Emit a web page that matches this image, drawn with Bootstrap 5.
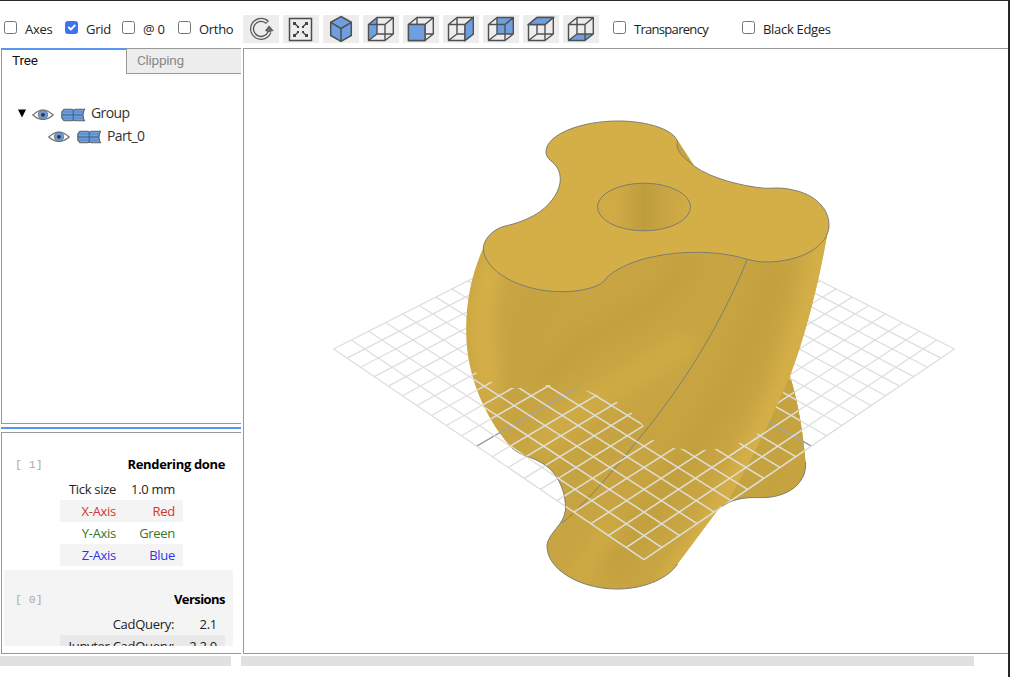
<!DOCTYPE html>
<html lang="en">
<head>
<meta charset="utf-8">
<title>CAD Viewer</title>
<meta name="viewport" content="width=device-width, initial-scale=1">
<link href="https://cdn.jsdelivr.net/npm/bootstrap@5.3.0/dist/css/bootstrap.min.css" rel="stylesheet">
<style>
body{width:1010px;height:677px;overflow:hidden;background:#fff;color:#222;font:13px/18px "Open Sans","Noto Sans",sans-serif;letter-spacing:-.3px}
.viewer{width:1010px;height:677px;border-top:1px solid #26272c;border-right:2px solid #26272c}
.toolbar{height:47px;padding-top:14px}
.opt{height:28px;gap:8px;white-space:nowrap}
.opt .form-check-input{width:13px;height:13px;margin:-4px 0 0;border:1px solid #767676;border-radius:2.5px;flex:none;background-size:13px}
.opt .form-check-input:checked{background-color:#3b74f2;border-color:#3b74f2}
.opt.long{letter-spacing:-.7px}
.left-opts{width:243px;padding-left:4px}
.tool{width:36px;height:28px;background:#ededed;border:0;padding:0;border-radius:0;line-height:0}
.tool svg{display:block}
.side{width:241px;padding-left:1px}
.tabs{height:26px;font:13.6px/21px Roboto,sans-serif;letter-spacing:-.15px}
.tab-a{width:125px;border-top:2px solid #5897ee;border-left:1px solid #999;padding-left:10px;color:#111}
.tab-b{width:115px;background:#ededed;border:1px solid #999;border-right:0;padding-left:10px;color:#888;line-height:23px;letter-spacing:-.3px}
.tree{height:350px;border-left:1px solid #999;border-bottom:1px solid #999;padding:28px 0 0 16px;font-size:14px;letter-spacing:-.6px;color:#333}
.tree-row{height:23px}
.tree-row span{margin-top:-2px}
.split{height:2px;background:#5897ee;margin:3px 0}
.info{height:222px;border:1px solid #999;border-right:0;padding:13px 8px 7px 2px}
.info-in{height:200px;overflow:hidden}
.sec{padding:9px 8px 0 11px}
.num{font:11.5px/16px "Liberation Mono",monospace;color:#aaa;width:45px;flex:none;letter-spacing:0;white-space:pre;padding-top:2px}
.ttl{font-weight:700;color:#000;text-align:right;letter-spacing:-.35px}
.sec2 .ttl{letter-spacing:-.55px}
.cells{display:grid;line-height:22px;text-align:right}
.cells>div{padding-right:8px;white-space:nowrap}
.alt{background:#f4f4f4}
.sec2{background:#f4f4f4}
.sec2 .alt{background:#e9e9e9}
.canvas3d{width:765px;height:606px;border:1px solid #999;border-right:0;margin-left:2px}
.canvas3d svg{display:block}
.bar{height:10px;background:#e0e1e3}
</style>
</head>
<body>
<svg width="0" height="0" class="d-block">
<defs>
<g id="cube" fill="none" stroke="#505050" stroke-width="1.400" stroke-linejoin="round"><path d="M5.500 9.500H22V25.500H5.500ZM14 2.500H30.300V19H14ZM5.500 9.500L14 2.500M22 9.500L30.300 2.500M22 25.500L30.300 19M5.500 25.500L14 19"/></g>
<g id="eye"><path d="M.8 7Q11 -2.800 21.200 7Q11 15.800 .8 7Z" fill="#fff" stroke="#777" stroke-width="1.300"/><circle cx="11" cy="6.800" r="4.700" fill="#6a9ad8" stroke="#666" stroke-width=".8"/><circle cx="11" cy="6.800" r="1.900" fill="#333"/></g>
<g id="shape"><path d="M3 1.200H11L12.500 2.200L14.500 1.200H23.500Q20.500 7 23.500 12.800H14.500L12.500 12L11 12.800H3L.8 10V4Z" fill="#6a9fe0" stroke="#606060" stroke-width="1.100"/><path d="M12.200 2V12.500M1 7H21.500" fill="none" stroke="#46597a" stroke-width="1"/><path d="M1.500 4H22M1.500 10H22" fill="none" stroke="#4a6ea6" stroke-width=".5"/></g>
</defs></svg>
<div class="viewer d-flex flex-column">
<div class="toolbar d-flex">
  <div class="left-opts d-flex">
    <label class="opt d-flex align-items-center" style="width:61px"><input class="form-check-input" type="checkbox">Axes</label>
    <label class="opt d-flex align-items-center" style="width:57px"><input class="form-check-input" type="checkbox" checked>Grid</label>
    <label class="opt d-flex align-items-center" style="width:56px"><input class="form-check-input" type="checkbox">@ 0</label>
    <label class="opt d-flex align-items-center"><input class="form-check-input" type="checkbox">Ortho</label>
  </div>
  <div class="d-flex gap-1">
    <button class="tool" aria-label="Reset"><svg width="36" height="28" fill="none" stroke="#5a5a5a"><path d="M24.500 7.500A9 9 0 1 0 26.500 17" stroke-width="4.200"/><path d="M23.800 7A9 9 0 1 0 26.500 17" stroke="#ededed" stroke-width="1.600"/><path d="M23 15.500L26 11.500L29.500 15.500L26 16.500Z" fill="#777" stroke-width="1.300"/></svg></button>
    <button class="tool" aria-label="Fit"><svg width="36" height="28" fill="none" stroke="#4c4c4c" stroke-width="1.500"><path d="M6.500 3.500H28.500V25.500H6.500Z"/><path d="M11 8L15.500 12M24 8L19.500 12M11 21L15.500 17M24 21L19.500 17"/><path d="M10 7h3v3h-3zM22 7h3v3h-3zM10 19h3v3h-3zM22 19h3v3h-3zM14 11h2v2h-2zM19 11h2v2h-2zM14 16h2v2h-2zM19 16h2v2h-2z" fill="#444" stroke="none"/></svg></button>
    <button class="tool" aria-label="Isometric"><svg width="36" height="28" stroke="#505050" stroke-width="1.500"><path d="M18 1.500L28.300 7.300V20.500L18 26.500L7.700 20.500V7.300Z" fill="#6f9fe0"/><path d="M7.700 7.300L18 13.500L28.300 7.300M18 13.500V26.500" fill="none"/></svg></button>
    <button class="tool" aria-label="Left"><svg width="36" height="28"><path d="M5.500 9.500L14 2.500V19L5.500 25.500Z" fill="#6f9fe0"/><use href="#cube"/></svg></button>
    <button class="tool" aria-label="Front"><svg width="36" height="28"><use href="#cube"/><path d="M5.500 9.500H22V25.500H5.500Z" fill="#6f9fe0" stroke="#505050" stroke-width="1.400"/></svg></button>
    <button class="tool" aria-label="Right"><svg width="36" height="28"><use href="#cube"/><path d="M22 9.500L30.300 2.500V19L22 25.500Z" fill="#6f9fe0" stroke="#505050" stroke-width="1.400"/></svg></button>
    <button class="tool" aria-label="Back"><svg width="36" height="28"><path d="M14 2.500H30.300V19H14Z" fill="#6f9fe0"/><use href="#cube"/></svg></button>
    <button class="tool" aria-label="Top"><svg width="36" height="28"><use href="#cube"/><path d="M5.500 9.500L14 2.500H30.300L22 9.500Z" fill="#6f9fe0" stroke="#505050" stroke-width="1.400"/></svg></button>
    <button class="tool" aria-label="Bottom"><svg width="36" height="28"><path d="M5.500 25.500L14 19H30.300L22 25.500Z" fill="#6f9fe0"/><use href="#cube"/></svg></button>
  </div>
  <div class="d-flex" style="padding-left:14px">
    <label class="opt long d-flex align-items-center" style="width:129px"><input class="form-check-input" type="checkbox">Transparency</label>
    <label class="opt d-flex align-items-center"><input class="form-check-input" type="checkbox">Black Edges</label>
  </div>
</div>
<div class="d-flex">
  <div class="side">
    <div class="tabs d-flex"><div class="tab-a">Tree</div><div class="tab-b">Clipping</div></div>
    <div class="tree">
      <div class="tree-row d-flex align-items-center"><svg width="8" height="9"><path d="M0 .5H8L4 8.500Z" fill="#000"/></svg><svg width="23" height="14" style="margin:3px 0 0 6px"><use href="#eye"/></svg><svg width="25" height="14" style="margin:3px 5px 0 6px"><use href="#shape"/></svg><span>Group</span></div>
      <div class="tree-row d-flex align-items-center" style="padding-left:30px"><svg width="23" height="14" style="margin-top:1px"><use href="#eye"/></svg><svg width="25" height="14" style="margin:1px 5px 0 6px"><use href="#shape"/></svg><span>Part_0</span></div>
    </div>
    <div class="split"></div>
    <div class="info"><div class="info-in">
      <div class="sec d-flex" style="height:124px"><div class="num">[ 1]</div><div class="flex-fill">
        <div class="ttl">Rendering done</div>
        <div class="cells" style="grid-template-columns:64px 59px;padding-top:5px"><div>Tick size</div><div>1.0 mm</div><div class="alt" style="color:#d8352c">X-Axis</div><div class="alt" style="color:#d8352c">Red</div><div style="color:#38761d">Y-Axis</div><div style="color:#38761d">Green</div><div class="alt" style="color:#3333e6">Z-Axis</div><div class="alt" style="color:#3333e6">Blue</div></div>
      </div></div>
      <div class="sec sec2 d-flex" style="height:120px;padding-top:20px"><div class="num">[ 0]</div><div class="flex-fill">
        <div class="ttl">Versions</div>
        <div class="cells" style="grid-template-columns:122px 43px;padding-top:5px"><div>CadQuery:</div><div>2.1</div><div class="alt">Jupyter CadQuery:</div><div class="alt">2.2.0</div></div>
      </div></div>
    </div></div>
  </div>
  <div class="canvas3d">
  <svg width="764" height="604" viewBox="244 49 764 604">
    <defs>
      <path id="body" d="M483.300 248C472 273 465.500 302 466.300 335C467 375 485 419 512 448C521 456 530 456 542 463C559 473 566 493 565.500 510C564 525 549 532 547 545C546 570 582 590 620 589C648 588 669 577 677.500 564L720 507C742 494 755 499 771 497C793 494 807 480 805.500 462C803 431 798 402 790 376C805 336 818 288 829 225L700 230Z"/>
      <path id="top" d="M546 151.700C546 135 580 121 618.300 121C648 121 675 130 677.500 142C675 152 686 159 695 166.700C711 178 740 186 765 188.300C776 188.300 781 187 793 190C814 194 829 208 829 225C829 246 801 262 766 262C760 262 754 261 747.300 259.300C733 255 714 252 696 252.300C668 252.300 642 258 626.700 265C618 269 609 274 604 281C597 288 579 292 560 291.700C518 291 483.500 270 483.300 248C484 239 493 228 508.300 225.300C522 222 532 217 540 211.700C553 202 560 190 560.300 180C560.500 170 556 165 550 160C547 157 546 155 546 151.700Z"/>
      <clipPath id="bodyClip"><use href="#body"/></clipPath>
      <clipPath id="frontClip"><path d="M460 365L477 373L491 382L512 388L520 388L548 385L576 388L588 391L597 395L617 402L632 413L643 425L647 433L653 440L674 448L683 449L704 450L716 449L740 443L757 434L769 421L778 403L783 393L791 374L840 400V600H460Z"/></clipPath>
      <filter id="soft" filterUnits="userSpaceOnUse" x="430" y="200" width="430" height="420" color-interpolation-filters="sRGB"><feGaussianBlur stdDeviation="9"/></filter>
      <linearGradient id="hole"><stop offset="0" stop-color="#cfaa45"/><stop offset=".2" stop-color="#d0ab45"/><stop offset=".5" stop-color="#be9d3e"/><stop offset=".8" stop-color="#cba744"/><stop offset="1" stop-color="#d1ac46"/></linearGradient>
    </defs>
    <g id="gridBack" stroke="#dedede" stroke-width="1.300"></g>
    <use href="#body" fill="#c8a542"/>
    <g clip-path="url(#bodyClip)" fill="none">
      <g filter="url(#soft)">
        <path d="M500 245Q473 310 486 360Q492 410 530 450" stroke="#d7b149" stroke-width="22"/>
        <path d="M550 285Q510 350 505 400Q510 440 550 462" stroke="#c4a240" stroke-width="18"/>
        <path d="M690 258Q670 300 615 325Q570 345 540 385" stroke="#c1a03e" stroke-width="22"/>
        <path d="M690 340Q645 370 600 395Q560 420 535 450" stroke="#cfab45" stroke-width="26"/>
        <path d="M650 425Q600 440 560 490" stroke="#c4a240" stroke-width="16"/>
        <path d="M775 265Q745 370 705 430Q655 500 610 570" stroke="#c2a03e" stroke-width="26"/>
        <path d="M826 225Q805 340 772 410Q725 510 665 590" stroke="#d8b24a" stroke-width="20"/>
        <path d="M620 520Q590 550 575 590" stroke="#cfab45" stroke-width="18"/>
      </g>
      <path d="M790 376Q763 440 726 505L750 505L815 500V440Z" fill="#c5a340"/>
      <path d="M801 435Q807 475 785 493" stroke="#cca844" stroke-width="5" filter="url(#soft)"/>
    </g>
    <path d="M677.500 140L695 167L688 178L670 150Z" fill="#c7a442"/>
    <use href="#top" fill="#d4af47" stroke="#7d7d75"/>
    <ellipse cx="644" cy="207" rx="46.500" ry="23.800" fill="url(#hole)" stroke="#7d7d75"/>
    <g fill="none" stroke="#7f7e74"><path d="M747.300 259.300C725 315 690 375 650 425C620 462 590 500 562 523"/><path d="M512 448C521 456 530 456 542 463C559 473 566 493 565.500 510C564 525 549 532 547 545C546 570 582 590 620 589C648 588 669 577 677.500 564M722 506C742 494 755 499 771 497C793 494 807 480 805.500 462"/></g>
    <g clip-path="url(#bodyClip)"><g id="gridFront" clip-path="url(#frontClip)" stroke="#dfdfd8" stroke-width="1.500"></g></g>
  </svg>
  </div>
</div>
<div class="d-flex" style="padding-top:2px;gap:10px"><div class="bar" style="width:231px"></div><div class="bar" style="width:733px"></div></div>
</div>
<script>
// Perspective projection of the 20 x 20 ground grid, u and v in -1..1
function project(u, v) {
  var w = 1 - 0.0723 * (u + v);
  return [644 + 155.2 * (u - v) / w, (349 + 64.9 * (u + v)) / w];
}
function gridLines(id, axis) {
  var g = document.getElementById(id);
  function add(a, b, color) {
    var l = document.createElementNS('http://www.w3.org/2000/svg', 'line');
    l.setAttribute('x1', a[0]); l.setAttribute('y1', a[1]);
    l.setAttribute('x2', b[0]); l.setAttribute('y2', b[1]);
    if (color) l.setAttribute('stroke', color);
    g.appendChild(l);
  }
  for (var i = -10; i <= 10; i++) {
    var t = i / 10, c = i === 0 ? axis : null;
    add(project(t, -1), project(t, 1), c);
    add(project(-1, t), project(1, t), c);
  }
}
gridLines('gridBack', '#999999');
gridLines('gridFront', '#a5a59f');
</script>
<script src="https://cdn.jsdelivr.net/npm/bootstrap@5.3.0/dist/js/bootstrap.bundle.min.js"></script>
</body>
</html>
